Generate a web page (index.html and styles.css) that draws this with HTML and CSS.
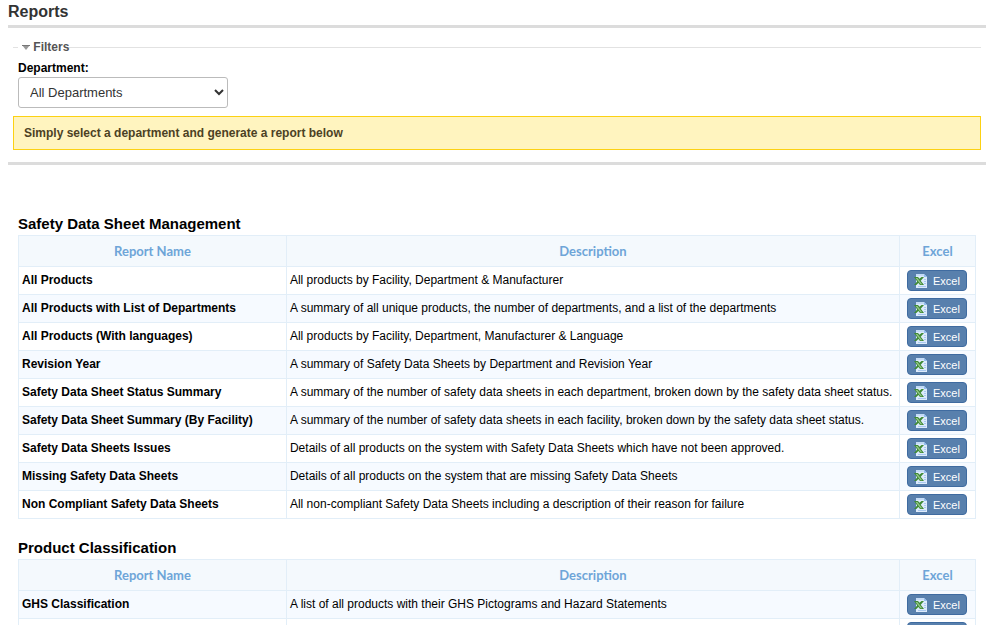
FILE: index.html
```html
<!DOCTYPE html>
<html lang="en">
<head>
  <meta charset="utf-8">
  <title>Reports</title>
  <link rel="stylesheet" href="styles.css">
</head>
<body>
  <!-- Excel icon, used by every export button -->
  <svg class="sprite" width="0" height="0">
    <symbol id="xls" viewBox="0 0 14 14">
      <path d="M2 0h8l3 3v11H2z" fill="#dceafb"/>
      <path d="M2 0h8v2H2z" fill="#c3dbf6"/>
      <path d="M10 0v3h3z" fill="#8fbcf0"/>
      <path d="M10 5.500h2M10 7.500h2M10 9.500h2M4 12.500h8" stroke="#a9c9f0" fill="none"/>
      <path d="M0 3h4l1.500 1.700L7.500 3H10L6.700 6.700 10 11H6L4.400 8.900 2.300 11H0l3.200-3.600z" fill="#3f8a35"/>
      <path d="M1.600 4H3.500L8.200 10.200H6.500z" fill="#93c486"/>
    </symbol>
  </svg>

  <h1>Reports</h1>

  <form class="filter-panel">
    <fieldset class="filters">
      <legend>
        <svg class="arrow" width="8" height="6" viewBox="0 0 8 6"><path d="M0 0h8L4 5z" fill="#999"/><path d="M0 0h8v1H0z" fill="#777"/></svg>
        Filters
      </legend>
      <label for="department">Department:</label>
      <select id="department">
        <option>All Departments</option>
      </select>
    </fieldset>
    <div class="notice">Simply select a department and generate a report below</div>
  </form>

  <div class="reports">
    <h2>Safety Data Sheet Management</h2>
    <table>
      <thead>
        <tr><th class="name">Report Name</th><th>Description</th><th class="export">Excel</th></tr>
      </thead>
      <tbody>
        <tr>
          <td class="name">All Products</td>
          <td>All products by Facility, Department &amp; Manufacturer</td>
          <td class="export"><button type="button" class="btn"><svg><use href="#xls"/></svg>Excel</button></td>
        </tr>
        <tr class="alt">
          <td class="name">All Products with List of Departments</td>
          <td>A summary of all unique products, the number of departments, and a list of the departments</td>
          <td class="export"><button type="button" class="btn"><svg><use href="#xls"/></svg>Excel</button></td>
        </tr>
        <tr>
          <td class="name">All Products (With languages)</td>
          <td>All products by Facility, Department, Manufacturer &amp; Language</td>
          <td class="export"><button type="button" class="btn"><svg><use href="#xls"/></svg>Excel</button></td>
        </tr>
        <tr class="alt">
          <td class="name">Revision Year</td>
          <td>A summary of Safety Data Sheets by Department and Revision Year</td>
          <td class="export"><button type="button" class="btn"><svg><use href="#xls"/></svg>Excel</button></td>
        </tr>
        <tr>
          <td class="name">Safety Data Sheet Status Summary</td>
          <td>A summary of the number of safety data sheets in each department, broken down by the safety data sheet status.</td>
          <td class="export"><button type="button" class="btn"><svg><use href="#xls"/></svg>Excel</button></td>
        </tr>
        <tr class="alt">
          <td class="name">Safety Data Sheet Summary (By Facility)</td>
          <td>A summary of the number of safety data sheets in each facility, broken down by the safety data sheet status.</td>
          <td class="export"><button type="button" class="btn"><svg><use href="#xls"/></svg>Excel</button></td>
        </tr>
        <tr>
          <td class="name">Safety Data Sheets Issues</td>
          <td>Details of all products on the system with Safety Data Sheets which have not been approved.</td>
          <td class="export"><button type="button" class="btn"><svg><use href="#xls"/></svg>Excel</button></td>
        </tr>
        <tr class="alt">
          <td class="name">Missing Safety Data Sheets</td>
          <td>Details of all products on the system that are missing Safety Data Sheets</td>
          <td class="export"><button type="button" class="btn"><svg><use href="#xls"/></svg>Excel</button></td>
        </tr>
        <tr>
          <td class="name">Non Compliant Safety Data Sheets</td>
          <td>All non-compliant Safety Data Sheets including a description of their reason for failure</td>
          <td class="export"><button type="button" class="btn"><svg><use href="#xls"/></svg>Excel</button></td>
        </tr>
      </tbody>
    </table>

    <h2>Product Classification</h2>
    <table>
      <thead>
        <tr><th class="name">Report Name</th><th>Description</th><th class="export">Excel</th></tr>
      </thead>
      <tbody>
        <tr class="alt">
          <td class="name">GHS Classification</td>
          <td>A list of all products with their GHS Pictograms and Hazard Statements</td>
          <td class="export"><button type="button" class="btn"><svg><use href="#xls"/></svg>Excel</button></td>
        </tr>
        <tr>
          <td class="name"></td>
          <td></td>
          <td class="export"><button type="button" class="btn"><svg><use href="#xls"/></svg>Excel</button></td>
        </tr>
      </tbody>
    </table>
  </div>
</body>
</html>
```
FILE: styles.css
```css
* {
  box-sizing: border-box;
}

body {
  margin: 0;
  padding: 0 14px 0 8px;
  font-family: Arial, "Liberation Sans", sans-serif;
  font-size: 12px;
  line-height: 16px;
  color: #000;
  background: #fff;
}

.sprite {
  position: absolute;
}

h1 {
  margin: 0;
  padding: 3px 0 4px;
  font-size: 16px;
  line-height: 18px;
  color: #333;
}

/* Filters */
.filter-panel {
  border-top: 3px solid #dcdcdc;
  border-bottom: 3px solid #dcdcdc;
  padding: 11px 5px 12px;
}

.filters {
  margin: 0;
  padding: 5px 5px 8px;
  border: 0 solid #e2e2e2;
  border-top-width: 1px;
}

.filters legend {
  padding: 0 0 0 4px;
  font-weight: bold;
  color: #555;
}

.arrow {
  margin-right: 0;
}

.filters label {
  display: block;
  margin-bottom: 1px;
  font-weight: bold;
}

.filters select {
  display: block;
  width: 210px;
  height: 31px;
  padding: 0 2px 0 7px;
  border: 1px solid #bbb;
  border-radius: 3px;
  background: #fff;
  font-family: inherit;
  font-size: 13px;
  color: #333;
}

.notice {
  padding: 8px 10px;
  border: 1px solid #fcd113;
  background: #fff4bf;
  font-weight: bold;
  color: #4c4124;
}

/* Report tables */
.reports {
  padding: 50px 10px 0;
}

h2 {
  margin: 0;
  padding-bottom: 2px;
  font-size: 15px;
  line-height: 18px;
}

table {
  width: 100%;
  margin-bottom: 20px;
  border-collapse: collapse;
  table-layout: fixed;
}

th,
td {
  border: 1px solid #e2eef8;
  padding: 0 3px;
}

th {
  height: 31px;
  background: #f4f9fd;
  font-family: "Century Gothic", Lato, sans-serif;
  font-size: 13px;
  color: #6ea5d8;
}

td {
  height: 28px;
  padding-bottom: 2px;
}

.name {
  width: 28%;
}

td.name {
  font-weight: bold;
}

.export {
  width: 76px;
  text-align: center;
}

td.export {
  padding: 0 8px 0 7px;
}

.alt td {
  background: #f6faff;
}

.btn {
  display: flex;
  align-items: center;
  gap: 5px;
  width: 60px;
  height: 21px;
  padding: 0 6px;
  border: 1px solid #3f6ba0;
  border-radius: 4px;
  background: #5880ad;
  font-family: inherit;
  font-size: 11px;
  color: #fff;
}

.btn svg {
  flex: none;
  width: 14px;
  height: 14px;
}
```
